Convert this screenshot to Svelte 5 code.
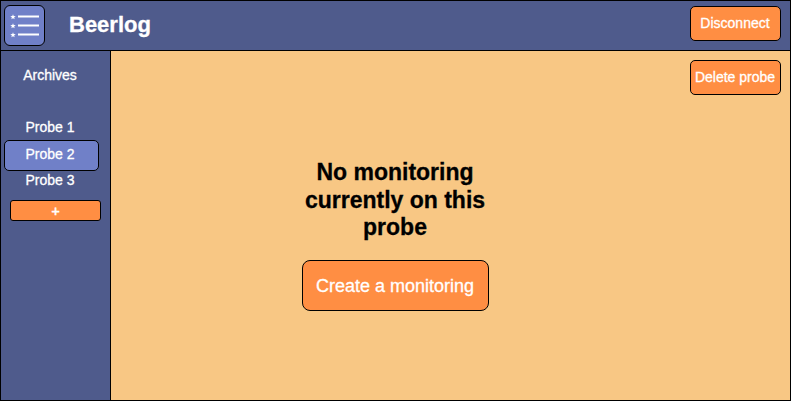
<script>
  const probes = ['Probe 1', 'Probe 2', 'Probe 3'];
  let selected = $state('Probe 2');
  const rows = [11, 20, 29];
</script>

<div class="app">
  <header>
    <button class="menu" aria-label="Menu">
      <svg width="39" height="39" viewBox="0 0 39 39">
        {#each rows as y}
          <g transform="translate(8 {y})">
            <path d="M0-2.7 .7-.9 2.7-.8 1.1.4 1.7 2.3 0 1.2-1.7 2.3-1.1.4-2.7-.8-.7-.9Z" fill="#fff" />
            <path d="M5 -.5H26" stroke="#fff" stroke-width="2" />
          </g>
        {/each}
      </svg>
    </button>
    <h1>Beerlog</h1>
    <button class="action">Disconnect</button>
  </header>
  <div class="body">
    <aside>
      <div class="archives">Archives</div>
      <nav>
        {#each probes as probe}
          <button class="probe" class:selected={probe === selected} onclick={() => (selected = probe)}>{probe}</button>
        {/each}
      </nav>
      <button class="add">+</button>
    </aside>
    <main>
      <button class="action delete">Delete probe</button>
      <h2>No monitoring currently on this probe</h2>
      <button class="create">Create a monitoring</button>
    </main>
  </div>
</div>

<style>
  .app {
    box-sizing: border-box;
    width: 791px;
    height: 401px;
    border: 1px solid #000;
    display: flex;
    flex-direction: column;
    font-family: "Liberation Sans", Arial, sans-serif;
    font-size: 14px;
    color: #fff;
    background: #f8c784;
    -webkit-text-stroke: 0.3px currentColor;
  }
  button {
    box-sizing: border-box;
    margin: 0;
    padding: 0;
    font: inherit;
    color: inherit;
    white-space: nowrap;
    border: 1px solid #000;
    background: #ff8e43;
  }
  header {
    box-sizing: border-box;
    height: 50px;
    flex: none;
    display: flex;
    align-items: flex-start;
    padding: 4px 9px 0 3px;
    background: #4f5b8c;
    border-bottom: 1px solid #000;
  }
  .menu {
    width: 41px;
    height: 41px;
    border-radius: 6px;
    background: #7080c8;
  }
  .menu svg {
    display: block;
  }
  h1 {
    margin: 7px auto 0 24px;
    font-size: 22px;
    line-height: 26px;
  }
  .action {
    width: 91px;
    height: 35px;
    padding: 0 1px 2px 0;
    border-radius: 5px;
  }
  header .action {
    margin-top: 1px;
  }
  .body {
    flex: 1;
    display: flex;
  }
  aside {
    box-sizing: border-box;
    width: 110px;
    display: flex;
    flex-direction: column;
    padding-top: 16px;
    background: #4f5b8c;
    border-right: 1px solid #000;
  }
  .archives {
    width: 98px;
    height: 47px;
    line-height: 16px;
    text-align: center;
  }
  nav {
    display: flex;
    flex-direction: column;
    padding-left: 3px;
  }
  .probe {
    width: 95px;
    height: 26px;
    padding-right: 3px;
    border: none;
    background: none;
  }
  .probe.selected {
    height: 31px;
    padding-bottom: 4px;
    border: 1px solid #000;
    border-radius: 5px;
    background: #7080c8;
  }
  .probe:last-child {
    height: 20px;
    padding-bottom: 2px;
  }
  .add {
    width: 91px;
    height: 21px;
    margin: 9px 0 0 9px;
    border-radius: 3px;
    -webkit-text-stroke-width: 0.6px;
  }
  main {
    flex: 1;
    display: flex;
    flex-direction: column;
    align-items: center;
    padding-right: 111px;
  }
  .delete {
    align-self: flex-end;
    margin: 9px -102px 0 0;
  }
  h2 {
    width: 190px;
    margin: 64px 0 0;
    font-size: 23px;
    line-height: 27.6px;
    text-align: center;
    color: #000;
  }
  .create {
    width: 187px;
    height: 51px;
    margin-top: 18px;
    padding-top: 2px;
    border-radius: 8px;
    font-size: 18px;
  }
</style>
